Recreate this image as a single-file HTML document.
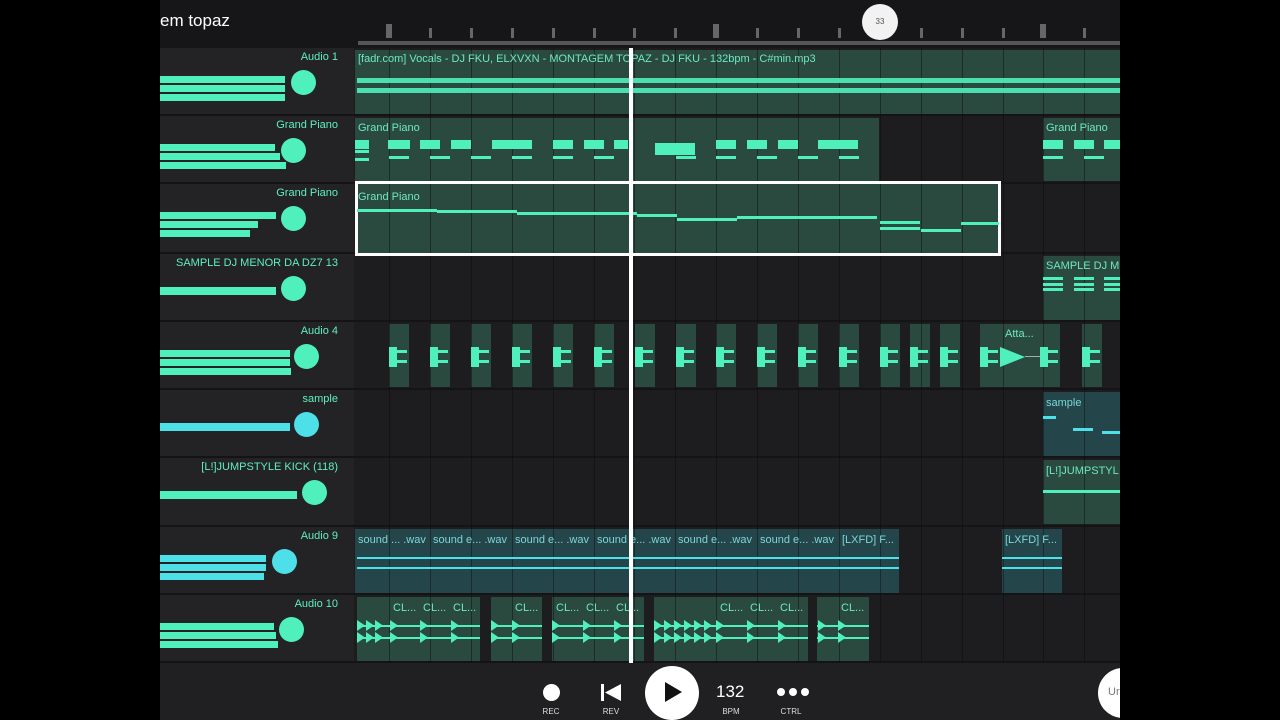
<!DOCTYPE html>
<html><head><style>
body{margin:0;width:1280px;height:720px;background:#000;overflow:hidden;font-family:"Liberation Sans",sans-serif;position:relative}
div{position:absolute;box-sizing:border-box}
.app{left:160px;top:0;width:960px;height:720px;background:#1d1d1f;overflow:hidden}
.g{background:rgba(10,10,10,0.45);width:1px}
.clip{background:#2a4a40}
.clipb{background:#24454a}
.t{color:#6ee8c0;font-size:11px;white-space:nowrap}
.tc{color:#7ad8d8;font-size:11px;white-space:nowrap}
.n{background:#4ff0bc}
.c{background:#4ee0e8}
.name{color:#5ef0c0;font-size:11px;text-align:right;width:178px;left:0}
.lab{color:#ddd;font-size:8px;text-align:center;width:40px}
</style></head><body>
<div class="app" id="app">
<div style="left:0;top:0;width:960px;height:48px;background:#161618"></div>
<div style="left:0;top:11px;color:#fff;font-size:17px">em topaz</div>
<div style="left:198px;top:41px;width:762px;height:4px;background:#555"></div>
<div style="left:0;top:48px;width:194px;height:615px;background:#232325"></div>
<div style="left:0;top:663px;width:960px;height:57px;background:#202022"></div>
</div>
<script>
const a=document.getElementById('app');
function d(x,y,w,h,c,extra){const e=document.createElement('div');e.style.cssText=`left:${x-160}px;top:${y}px;width:${w}px;height:${h}px;`+(extra||'');if(c)e.className=c;a.appendChild(e);return e;}
function tx(x,y,s,c){const e=d(x,y,0,0,c);e.style.width='auto';e.style.height='auto';e.textContent=s;return e;}
for(let i=0;i<18;i++){const x=389+i*40.9;const big=i%8==0;d(x-(big?3:1),big?24:28,big?6:3,big?14:10,'', 'background:#666');}
const circ=d(862,4,36,36,'','background:#f2f2f2;border-radius:50%;color:#555;font-size:8px;text-align:center;line-height:36px;z-index:5');circ.textContent='33';
const rows=[48,116,184,254,322,390,458,527,595,663];
for(let i=0;i<9;i++){d(160,rows[i+1]-2,960,2,'','background:#141416');}
const C=(x,y,w,h,b)=>d(x,y,w,h,b?'clipb':'clip');
C(355,50,765,64);
C(355,118,524,63);C(1043,118,77,63);
C(355,184,646,70);
C(1043,256,77,64);
[389,430,471,512,553,594,635,676,716,757,798,839,880,910,940,980,1040,1082].forEach(x=>C(x,324,20,63));C(980,324,62,63);
C(1043,392,77,64,1);C(1043,460,77,64);
C(355,529,544,64,1);C(1002,529,60,64,1);
C(357,597,123,64);C(491,597,51,64);C(552,597,92,64);C(654,597,154,64);C(817,597,52,64);
for(let i=0;i<18;i++){d(389+i*40.9,48,1,615,'g');}
const names=[['Audio 1',303,'n',[285,285,285]],['Grand Piano',293,'n',[275,280,286]],['Grand Piano',293,'n',[276,258,250]],['SAMPLE DJ MENOR DA DZ7 13',293,'n',[276]],['Audio 4',306,'n',[290,290,291]],['sample',306,'c',[290]],['[L!]JUMPSTYLE KICK (118)',314,'n',[297]],['Audio 9',284,'c',[266,266,264]],['Audio 10',291,'n',[274,276,278]]];
names.forEach((n,i)=>{const y=rows[i];const e=d(160,y+3,178,14,'name');e.textContent=n[0];
 const k=n[3].length;n[3].forEach((w,j)=>{d(160,y+(k==1?33:28+j*9),w-160,k==1?8:7,n[2]);});
 d(n[1]-12,y+22,25,25,n[2],'border-radius:50%');});
tx(358,53,'[fadr.com] Vocals - DJ FKU, ELXVXN - MONTAGEM TOPAZ - DJ FKU - 132bpm - C#min.mp3','t');
d(357,78,763,5,'n','opacity:.9');d(357,88,763,5,'n','opacity:.9');
tx(358,122,'Grand Piano','t');tx(1046,122,'Grand Piano','t');tx(358,191,'Grand Piano','t');
[[355,140,14],[388,140,22],[420,140,20],[451,140,20],[492,140,40],[553,140,20],[584,140,20],[614,140,14],[655,143,40],[716,140,20],[747,140,20],[778,140,20],[818,140,40],[1043,140,20],[1074,140,20],[1104,140,16]].forEach(n=>d(n[0],n[1],n[2],9,'n'));
[[355,150,14],[355,158,14],[389,156,20],[430,156,20],[471,156,20],[512,156,20],[553,156,20],[594,156,20],[655,152,40],[676,156,20],[716,156,20],[757,156,20],[798,156,20],[839,156,20],[1043,156,20],[1084,156,20]].forEach(n=>d(n[0],n[1],n[2],3,'n'));
d(355,181,646,75,'','border:3px solid #fff');
[[357,209,80],[437,210,80],[517,212,120],[637,214,40],[677,218,60],[737,216,140],[880,221,40],[880,227,40],[921,229,40],[961,222,38]].forEach(n=>d(n[0],n[1],n[2],3,'n'));
tx(1046,260,'SAMPLE DJ MENOR DA DZ7 13','t');[1043,1074,1104].forEach(x=>{d(x,277,20,3,'n');d(x,283,20,3,'n');d(x,288,20,3,'n');});
[389,430,471,512,553,594,635,676,716,757,798,839,880,910,940,980,1040,1082].forEach(x=>{d(x,347,8,20,'n');d(x+8,350,10,3,'n');d(x+8,360,10,3,'n');});
d(1000,347,25,20,'n','clip-path:polygon(0 0,100% 50%,0 100%)');d(1025,356,15,1,'','background:#aaa');
tx(1005,328,'Atta...','t');
tx(1046,397,'sample','tc');d(1043,416,13,3,'c');d(1073,428,20,3,'c');d(1102,431,18,3,'c');
tx(1046,465,'[L!]JUMPSTYL','t');d(1043,490,77,3,'n');
[[358,'sound ... .wav'],[433,'sound e... .wav'],[515,'sound e... .wav'],[597,'sound e... .wav'],[678,'sound e... .wav'],[760,'sound e... .wav'],[842,'[LXFD] F...'],[1005,'[LXFD] F...']].forEach(c=>tx(c[0],534,c[1],'tc'));
d(357,557,542,2,'c');d(357,567,542,2,'c');d(1002,557,60,2,'c');d(1002,567,60,2,'c');
[[393,'CL...'],[423,'CL...'],[453,'CL...'],[515,'CL...'],[556,'CL...'],[586,'CL...'],[616,'CL...'],[720,'CL...'],[750,'CL...'],[780,'CL...'],[841,'CL...']].forEach(c=>tx(c[0],602,c[1],'t'));
[[357,123],[491,51],[552,92],[654,154],[817,52]].forEach(c=>{d(c[0],625,c[1],2,'n');d(c[0],637,c[1],2,'n');});
[357,366,375,390,420,451,491,512,552,583,614,654,664,674,684,694,704,716,747,778,818,838].forEach(x=>{d(x,620,8,11,'n','clip-path:polygon(0 0,100% 50%,0 100%)');d(x,632,8,11,'n','clip-path:polygon(0 0,100% 50%,0 100%)');});
d(629,48,4,615,'','background:#fff');
d(543,684,17,17,'','background:#fff;border-radius:50%');
d(601,684,3,17,'','background:#fff');d(605,684,16,17,'','background:#fff;clip-path:polygon(100% 0,0 50%,100% 100%)');
d(645,666,54,54,'','background:#fff;border-radius:50%');d(665,682,17,20,'','background:#111;clip-path:polygon(0 0,100% 50%,0 100%)');
tx(716,682,'132','').style.cssText+='color:#fff;font-size:17px';
[777,789,801].forEach(x=>d(x,688,8,8,'','background:#fff;border-radius:50%'));
[[551,'REC'],[611,'REV'],[731,'BPM'],[791,'CTRL']].forEach(l=>{const e=d(l[0]-20,707,40,10,'lab');e.textContent=l[1];});
d(1098,668,50,50,'','background:#fff;border-radius:50%');tx(1108,686,'Ur','').style.cssText+='color:#777;font-size:11px';
</script>
</body></html>
